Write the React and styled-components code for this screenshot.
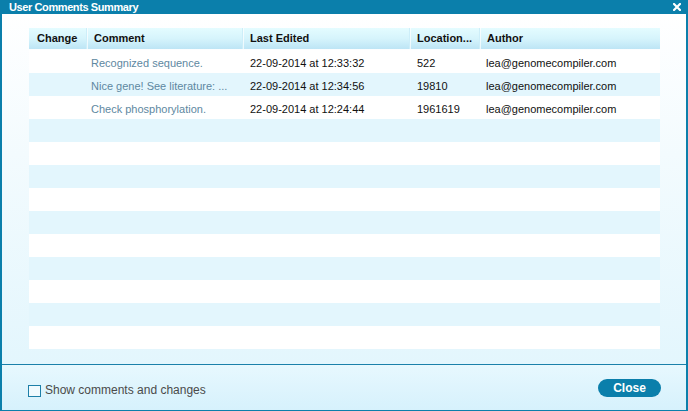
import React from "react";
import { styled, createGlobalStyle } from "styled-components";

const GlobalStyle = createGlobalStyle`
  html, body {
    margin: 0;
    padding: 0;
    background: #ffffff;
  }
  body {
    font-family: "Liberation Sans", Arial, sans-serif;
  }
`;

const Window = styled.div`
  width: 688px;
  height: 411px;
  box-sizing: border-box;
  display: flex;
  flex-direction: column;
  border: 2px solid #0b7fab;
  border-top: none;
  border-bottom-width: 1px;
`;

const TitleBar = styled.div`
  height: 14px;
  margin: 0 -2px;
  padding: 0 7px 0 9px;
  display: flex;
  align-items: center;
  justify-content: space-between;
  background: #0b7fab;
  color: #ffffff;
  font-size: 11px;
  font-weight: 700;
  letter-spacing: -0.4px;
  line-height: 14px;
`;

const CloseX = styled.span`
  display: flex;
  align-items: center;
`;

const Body = styled.div`
  flex: 1;
  padding: 14px 26px 15px 27px;
  background: linear-gradient(to bottom, #ffffff 0%, #f3fbfe 40%, #e3f6fd 100%);
  border-bottom: 1px solid #1a80aa;
`;

const Grid = styled.div`
  display: grid;
  grid-template-columns: 57px 156px 167px 70px 1fr;
`;

const HeaderRow = styled(Grid)`
  height: 21px;
  margin-bottom: 1px;
  background: linear-gradient(to bottom, #e4fcff 0%, #d6f4fc 50%, #bde5f5 100%);
`;

const HeadCell = styled.div`
  padding-left: ${({ $first }) => ($first ? "8px" : "7px")};
  font-size: 11px;
  font-weight: 700;
  color: #111111;
  line-height: 21px;
  border-left: ${({ $first }) => ($first ? "none" : "1px solid #cdeef9")};
  box-shadow: ${({ $first }) =>
    $first ? "none" : "inset 1px 0 0 rgba(255, 255, 255, 0.7)"};
  white-space: nowrap;
  overflow: hidden;
`;

const Row = styled(Grid)`
  height: 23px;
  background: ${({ $alt }) => ($alt ? "#e3f6fd" : "#ffffff")};
`;

const Cell = styled.div`
  box-sizing: border-box;
  padding: 3px 0 0 ${({ $pad }) => $pad || "8px"};
  font-size: 11px;
  line-height: 20px;
  color: ${({ $muted }) => ($muted ? "#5e88a1" : "#111111")};
  white-space: nowrap;
  overflow: hidden;
`;

const Footer = styled.div`
  height: 45px;
  box-sizing: border-box;
  padding: 0 25px 13px 26px;
  display: flex;
  align-items: flex-end;
  justify-content: space-between;
  background: linear-gradient(to bottom, #e7f8fe 0%, #d6f1fc 100%);
`;

const CheckLabel = styled.label`
  display: flex;
  align-items: center;
  gap: 4px;
  font-size: 12px;
  color: #4a4a4a;
  line-height: 13px;
`;

const Box = styled.span`
  width: 13px;
  height: 12px;
  box-sizing: border-box;
  border: 1.5px solid #1d7fa8;
  background: #f0fafe;
`;

const CloseButton = styled.button`
  width: 63px;
  height: 18px;
  padding: 0;
  border: none;
  border-radius: 9px;
  background: #0b7fab;
  color: #ffffff;
  font-family: "Liberation Sans", Arial, sans-serif;
  font-size: 12px;
  font-weight: 700;
  line-height: 18px;
  cursor: pointer;
`;

const comments = [
  {
    comment: "Recognized sequence.",
    edited: "22-09-2014 at 12:33:32",
    location: "522",
    author: "lea@genomecompiler.com",
  },
  {
    comment: "Nice gene! See literature: ...",
    edited: "22-09-2014 at 12:34:56",
    location: "19810",
    author: "lea@genomecompiler.com",
  },
  {
    comment: "Check phosphorylation.",
    edited: "22-09-2014 at 12:24:44",
    location: "1961619",
    author: "lea@genomecompiler.com",
  },
];

const TOTAL_ROWS = 13;

const App = () => {
  const rows = Array.from({ length: TOTAL_ROWS }, (_, i) => comments[i] || null);
  return (
    <>
      <GlobalStyle />
      <Window>
        <TitleBar>
          <span>User Comments Summary</span>
          <CloseX>
            <svg width="8" height="8" viewBox="0 0 8 8">
              <path
                d="M1 1 L7 7 M7 1 L1 7"
                stroke="#ffffff"
                strokeWidth="2.2"
                strokeLinecap="square"
              />
            </svg>
          </CloseX>
        </TitleBar>
        <Body>
          <HeaderRow>
            <HeadCell $first>Change</HeadCell>
            <HeadCell>Comment</HeadCell>
            <HeadCell>Last Edited</HeadCell>
            <HeadCell>Location...</HeadCell>
            <HeadCell>Author</HeadCell>
          </HeaderRow>
          {rows.map((r, i) => (
            <Row key={i} $alt={i % 2 === 1}>
              <Cell />
              <Cell $muted $pad="5px">
                {r ? r.comment : ""}
              </Cell>
              <Cell>{r ? r.edited : ""}</Cell>
              <Cell>{r ? r.location : ""}</Cell>
              <Cell $pad="7px">{r ? r.author : ""}</Cell>
            </Row>
          ))}
        </Body>
        <Footer>
          <CheckLabel>
            <Box />
            Show comments and changes
          </CheckLabel>
          <CloseButton>Close</CloseButton>
        </Footer>
      </Window>
    </>
  );
};

export default App;
